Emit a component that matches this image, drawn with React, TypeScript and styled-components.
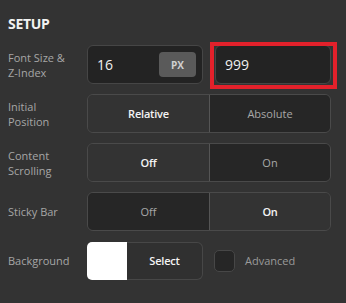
import React from "react";
import styled, { createGlobalStyle } from "styled-components";

const Global = createGlobalStyle`
  html, body { margin: 0; padding: 0; background: #333333; }
  body { font-family: "Open Sans", "Noto Sans", "DejaVu Sans", sans-serif; }
  * { box-sizing: border-box; }
`;

const Panel = styled.div`
  width: 346px;
  height: 303px;
  background: #333333;
  padding: 14px 15px 0 8px;
`;

const Title = styled.h2`
  margin: 0 0 12px 0;
  font-size: 14px;
  line-height: 19px;
  font-weight: 700;
  color: #f2f2f2;
  letter-spacing: -0.3px;
`;

const Rows = styled.div`
  display: flex;
  flex-direction: column;
  gap: 10px;
`;

const Row = styled.div`
  display: grid;
  grid-template-columns: 79px 244px;
  align-items: center;
  height: 39px;
`;

const Label = styled.div`
  font-size: 11px;
  line-height: 15px;
  color: #a6a6a6;
  letter-spacing: 0;
`;

const Pair = styled.div`
  display: grid;
  grid-template-columns: 116px 116px;
  gap: 12px;
  height: 39px;
`;

const InputBox = styled.div<{ $highlight?: boolean }>`
  position: relative;
  display: flex;
  align-items: center;
  justify-content: space-between;
  background: #232323;
  border: 1px solid #464646;
  border-radius: 6px;
  padding: 0 6px 0 9px;
  font-size: 14px;
  color: #f0f0f0;
  ${(p) =>
    p.$highlight &&
    `
    &::after {
      content: "";
      position: absolute;
      left: -6px;
      top: -4px;
      right: -7px;
      bottom: -6px;
      border: 4px solid #e3212b;
      pointer-events: none;
    }
  `}
`;

const UnitButton = styled.div`
  width: 37px;
  height: 25px;
  border-radius: 4px;
  background: #5a5a5a;
  color: #d0d0d0;
  font-size: 10px;
  font-weight: 700;
  display: flex;
  align-items: center;
  justify-content: center;
`;

const Segmented = styled.div`
  display: grid;
  grid-template-columns: 1fr 1fr;
  height: 39px;
  border: 1px solid #4a4a4a;
  border-radius: 6px;
  overflow: hidden;
`;

const Segment = styled.div<{ $active?: boolean }>`
  display: flex;
  align-items: center;
  justify-content: center;
  font-size: 11px;
  background: ${(p) => (p.$active ? "#333333" : "#262626")};
  color: ${(p) => (p.$active ? "#f4f4f4" : "#a8a8a8")};
  font-weight: ${(p) => (p.$active ? 600 : 400)};
  letter-spacing: ${(p) => (p.$active ? "-0.2px" : "0")};
  & + & {
    border-left: 1px solid #555555;
  }
`;

const BgRow = styled.div`
  display: flex;
  align-items: center;
  height: 38px;
`;

const ColorGroup = styled.div`
  display: flex;
  width: 116px;
  height: 38px;
`;

const Swatch = styled.div<{ $color: string }>`
  width: 40px;
  background: ${(p) => p.$color};
  border-radius: 5px 0 0 5px;
`;

const SelectButton = styled.div`
  flex: 1;
  display: flex;
  align-items: center;
  justify-content: center;
  border: 1px solid #474747;
  border-left: none;
  border-radius: 0 6px 6px 0;
  background: #303030;
  color: #f4f4f4;
  font-size: 11px;
  font-weight: 600;
  letter-spacing: -0.2px;
`;

const CheckLabel = styled.label`
  display: flex;
  align-items: center;
  margin-left: 11px;
  gap: 10px;
  font-size: 11px;
  color: #9a9a9a;
`;

const CheckBox = styled.span`
  width: 21px;
  height: 22px;
  border-radius: 5px;
  background: #262626;
  border: 1px solid #474747;
`;

const toggles = [
  { label: ["Initial", "Position"], options: ["Relative", "Absolute"], active: 0 },
  { label: ["Content", "Scrolling"], options: ["Off", "On"], active: 0 },
  { label: ["Sticky Bar"], options: ["Off", "On"], active: 1 },
];

export default function App() {
  return (
    <>
      <Global />
      <Panel>
        <Title>SETUP</Title>
        <Rows>
          <Row>
            <Label>
              Font Size &amp;
              <br />
              Z-Index
            </Label>
            <Pair>
              <InputBox>
                <span>16</span>
                <UnitButton>PX</UnitButton>
              </InputBox>
              <InputBox $highlight>
                <span>999</span>
              </InputBox>
            </Pair>
          </Row>
          {toggles.map((t) => (
            <Row key={t.label.join(" ")}>
              <Label>
                {t.label.map((l, i) => (
                  <React.Fragment key={l}>
                    {i > 0 && <br />}
                    {l}
                  </React.Fragment>
                ))}
              </Label>
              <Segmented>
                {t.options.map((o, i) => (
                  <Segment key={o} $active={i === t.active}>
                    {o}
                  </Segment>
                ))}
              </Segmented>
            </Row>
          ))}
          <Row>
            <Label>Background</Label>
            <BgRow>
              <ColorGroup>
                <Swatch $color="#ffffff" />
                <SelectButton>Select</SelectButton>
              </ColorGroup>
              <CheckLabel>
                <CheckBox />
                Advanced
              </CheckLabel>
            </BgRow>
          </Row>
        </Rows>
      </Panel>
    </>
  );
}
